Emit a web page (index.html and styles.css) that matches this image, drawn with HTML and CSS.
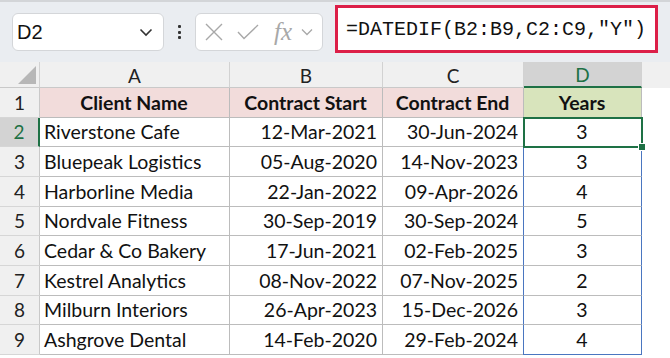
FILE: index.html
```html
<!DOCTYPE html>
<html lang="en">
<head>
  <meta charset="UTF-8">
  <title>DATEDIF Years</title>
  <link rel="stylesheet" href="styles.css">
</head>
<body>
  <!-- formula bar -->
  <div class="toolbar">
    <div class="name-box">
      <span>D2</span>
      <svg class="chev" width="14" height="9" viewBox="0 0 14 9"><path d="M1.5 1.5 L7 7 L12.5 1.5" fill="none" stroke="#333" stroke-width="1.6"/></svg>
    </div>
    <div class="dots"><i></i><i></i><i></i></div>
    <div class="fx-box">
      <svg width="18" height="18" viewBox="0 0 18 18"><path d="M1 1 L17 17 M17 1 L1 17" stroke="#a8a8a8" stroke-width="1.4" fill="none"/></svg>
      <svg width="22" height="16" viewBox="0 0 22 16"><path d="M1 8 L7 14.5 L21 1" stroke="#a8a8a8" stroke-width="1.4" fill="none"/></svg>
      <span class="fx">fx</span>
      <svg width="12" height="8" viewBox="0 0 12 8"><path d="M1 1.5 L6 6.5 L11 1.5" fill="none" stroke="#a8a8a8" stroke-width="1.3"/></svg>
    </div>
    <div class="formula">=DATEDIF(B2:B9,C2:C9,"Y")</div>
  </div>

  <!-- sheet -->
  <div class="sheet">
    <div class="corner"><span class="tri"></span></div>
    <div class="col-h">A</div>
    <div class="col-h">B</div>
    <div class="col-h">C</div>
    <div class="col-h sel">D</div>
    <div class="col-rest"></div>

    <div class="row-h">1</div>
    <div class="cell head">Client Name</div>
    <div class="cell head">Contract Start</div>
    <div class="cell head">Contract End</div>
    <div class="cell head yrs">Years</div>
    <div class="rest"></div>

    <div class="row-h sel">2</div>
    <div class="cell">Riverstone Cafe</div>
    <div class="cell num">12-Mar-2021</div>
    <div class="cell num">30-Jun-2024</div>
    <div class="cell mid active">3</div>
    <div class="rest"></div>

    <div class="row-h">3</div>
    <div class="cell">Bluepeak Logistics</div>
    <div class="cell num">05-Aug-2020</div>
    <div class="cell num">14-Nov-2023</div>
    <div class="cell mid range">3</div>
    <div class="rest"></div>

    <div class="row-h">4</div>
    <div class="cell">Harborline Media</div>
    <div class="cell num">22-Jan-2022</div>
    <div class="cell num">09-Apr-2026</div>
    <div class="cell mid range">4</div>
    <div class="rest"></div>

    <div class="row-h">5</div>
    <div class="cell">Nordvale Fitness</div>
    <div class="cell num">30-Sep-2019</div>
    <div class="cell num">30-Sep-2024</div>
    <div class="cell mid range">5</div>
    <div class="rest"></div>

    <div class="row-h">6</div>
    <div class="cell">Cedar &amp; Co Bakery</div>
    <div class="cell num">17-Jun-2021</div>
    <div class="cell num">02-Feb-2025</div>
    <div class="cell mid range">3</div>
    <div class="rest"></div>

    <div class="row-h">7</div>
    <div class="cell">Kestrel Analytics</div>
    <div class="cell num">08-Nov-2022</div>
    <div class="cell num">07-Nov-2025</div>
    <div class="cell mid range">2</div>
    <div class="rest"></div>

    <div class="row-h">8</div>
    <div class="cell">Milburn Interiors</div>
    <div class="cell num">26-Apr-2023</div>
    <div class="cell num">15-Dec-2026</div>
    <div class="cell mid range">3</div>
    <div class="rest"></div>

    <div class="row-h">9</div>
    <div class="cell">Ashgrove Dental</div>
    <div class="cell num">14-Feb-2020</div>
    <div class="cell num">29-Feb-2024</div>
    <div class="cell mid range last">4</div>
    <div class="rest"></div>
  </div>
</body>
</html>
```

FILE: styles.css
```css
body {
  margin: 0;
  padding: 0;
  width: 670px;
  height: 358px;
  overflow: hidden;
  background-color: #ffffff;
  font-family: 'Lato', 'Liberation Sans', sans-serif;
}

.toolbar {
  height: 62px;
  box-sizing: border-box;
  background-color: #eaedf1;
  border-top: 2px solid #d3d5d8;
  display: flex;
  align-items: center;
  padding: 0 12px 0 12px;
}

.name-box {
  width: 152px;
  height: 38px;
  box-sizing: border-box;
  background-color: white;
  border: 1px solid #d4d6d9;
  border-radius: 6px;
  display: flex;
  align-items: center;
  justify-content: space-between;
  padding: 0 10px 0 4px;
  font-family: 'Liberation Sans', sans-serif;
  font-size: 20px;
  color: #111;
}

.dots {
  width: 31px;
  display: flex;
  flex-direction: column;
  align-items: center;
  gap: 2.5px;
}

.dots i {
  display: block;
  width: 3px;
  height: 3px;
  background-color: #333;
  border-radius: 1px;
}

.fx-box {
  width: 128px;
  height: 38px;
  box-sizing: border-box;
  background-color: white;
  border: 1px solid #d4d6d9;
  border-radius: 6px;
  display: flex;
  align-items: center;
  gap: 14px;
  padding: 0 4px 0 9px;
}

.fx {
  font-family: 'Liberation Serif', serif;
  font-style: italic;
  font-size: 25px;
  color: #a8a8a8;
  margin-left: 1px;
  margin-right: -5px;
}

.formula {
  margin-left: 12px;
  align-self: flex-start;
  margin-top: 3px;
  width: 323px;
  height: 48px;
  box-sizing: border-box;
  background-color: white;
  border: 3px solid #dc1f48;
  display: flex;
  align-items: center;
  padding-left: 8px;
  font-family: 'Liberation Mono', monospace;
  font-size: 20px;
  color: #111;
}

.sheet {
  display: grid;
  grid-template-columns: 40px 190px 153px 141px 118px 1fr;
  grid-template-rows: 26px repeat(9, 29.67px);
  font-size: 19.5px;
  color: #111;
}

.corner, .col-h, .col-rest {
  background-color: #f0f0f0;
  border-bottom: 1px solid #c9c9c9;
  border-right: 1px solid #d2d2d2;
}

.col-rest {
  border-right: none;
  border-bottom: none;
}

.corner {
  position: relative;
}

.tri {
  position: absolute;
  right: 3px;
  bottom: 3px;
  width: 0;
  height: 0;
  border-left: 18px solid transparent;
  border-bottom: 18px solid #b7b7b7;
}

.col-h {
  display: flex;
  align-items: center;
  justify-content: center;
  font-size: 19px;
  padding-top: 1px;
  color: #222;
}

.col-h.sel {
  background-color: #d3d3d3;
  color: #1e7145;
  border-bottom: 2px solid #1e7145;
}

.row-h {
  background-color: #f0f0f0;
  border-right: 1px solid #c9c9c9;
  border-bottom: 1px solid #d6d6d6;
  display: flex;
  align-items: center;
  justify-content: center;
  font-size: 19px;
  color: #222;
}

.row-h.sel {
  background-color: #d3d3d3;
  color: #1e7145;
  border-right: 2px solid #1e7145;
}

.cell {
  border-right: 1px solid #bcbcbc;
  border-bottom: 1px solid #bcbcbc;
  display: flex;
  align-items: center;
  padding: 0 5px 0 4px;
  white-space: nowrap;
  overflow: hidden;
}

.cell.num {
  justify-content: flex-end;
}

.cell.mid {
  justify-content: center;
}

.cell.head {
  background-color: #f2dcdb;
  font-weight: 700;
  justify-content: center;
}

.cell.yrs {
  background-color: #d8e4bc;
}

.cell.active {
  position: relative;
  overflow: visible;
  outline: 2px solid #1e7145;
  outline-offset: -1px;
  z-index: 1;
}

.cell.active::after {
  content: "";
  position: absolute;
  right: -5px;
  bottom: -5px;
  width: 6px;
  height: 6px;
  background-color: #1e7145;
  border: 1px solid white;
}

.cell.range {
  border-left: 1.5px solid #4a76c0;
  border-right: 1.5px solid #4a76c0;
  margin-left: -1px;
}

.cell.range.last {
  border-bottom: 1.5px solid #4a76c0;
}

.rest {
  background-color: white;
}
```
